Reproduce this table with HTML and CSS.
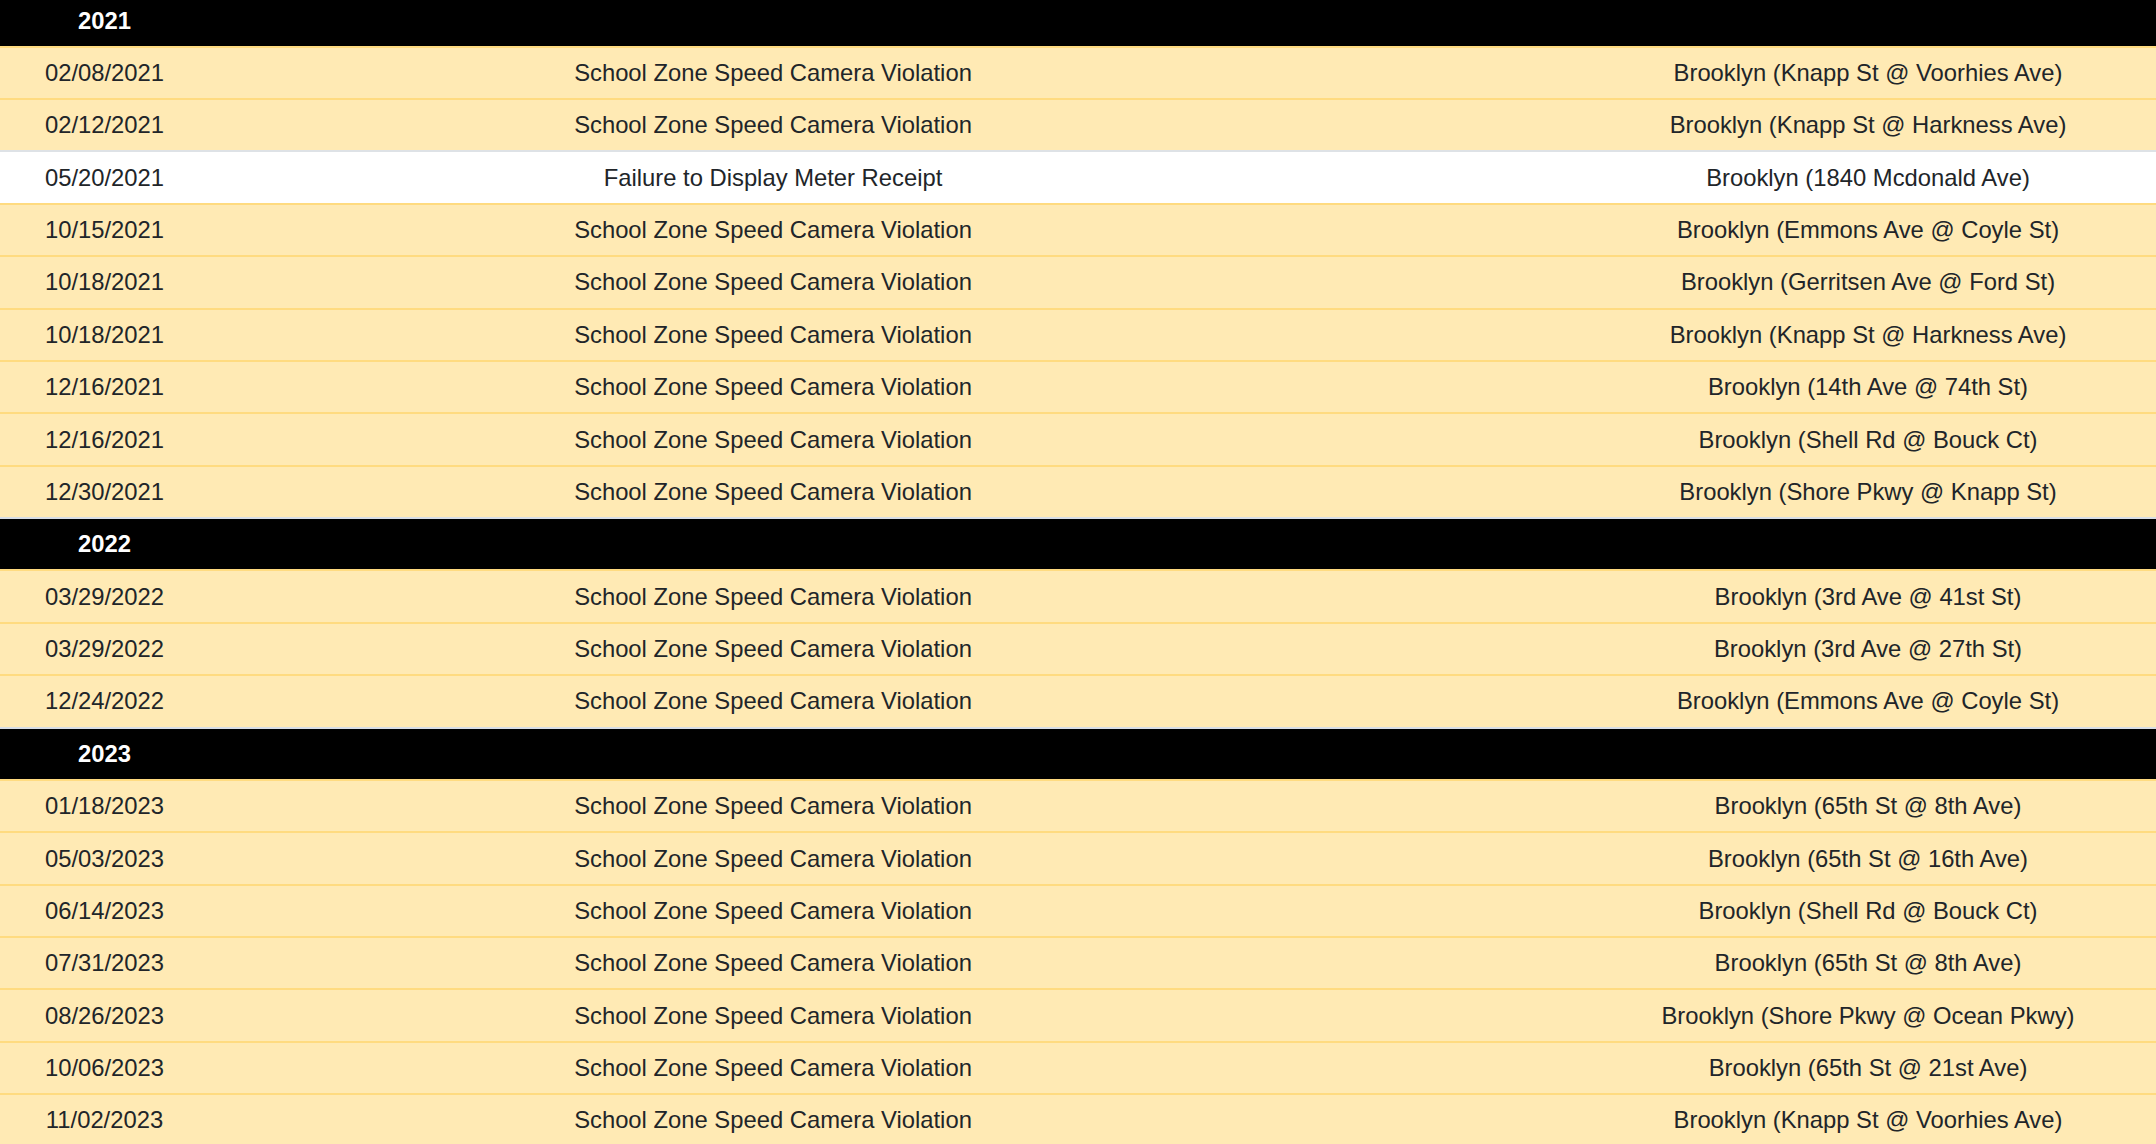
FILE: index.html
```html
<!DOCTYPE html>
<html lang="en">
<head>
<meta charset="utf-8">
<title>Violations</title>
<link rel="stylesheet" href="styles.css">
</head>
<body>
<div class="table">
  <div class="row year"><div class="cell">2021</div><div class="cell"></div><div class="cell"></div><div class="cell"></div></div>
  <div class="row warn"><div class="cell">02/08/2021</div><div class="cell">School Zone Speed Camera Violation</div><div class="cell"></div><div class="cell">Brooklyn (Knapp St @ Voorhies Ave)</div></div>
  <div class="row warn"><div class="cell">02/12/2021</div><div class="cell">School Zone Speed Camera Violation</div><div class="cell"></div><div class="cell">Brooklyn (Knapp St @ Harkness Ave)</div></div>
  <div class="row plain"><div class="cell">05/20/2021</div><div class="cell">Failure to Display Meter Receipt</div><div class="cell"></div><div class="cell">Brooklyn (1840 Mcdonald Ave)</div></div>
  <div class="row warn"><div class="cell">10/15/2021</div><div class="cell">School Zone Speed Camera Violation</div><div class="cell"></div><div class="cell">Brooklyn (Emmons Ave @ Coyle St)</div></div>
  <div class="row warn"><div class="cell">10/18/2021</div><div class="cell">School Zone Speed Camera Violation</div><div class="cell"></div><div class="cell">Brooklyn (Gerritsen Ave @ Ford St)</div></div>
  <div class="row warn"><div class="cell">10/18/2021</div><div class="cell">School Zone Speed Camera Violation</div><div class="cell"></div><div class="cell">Brooklyn (Knapp St @ Harkness Ave)</div></div>
  <div class="row warn"><div class="cell">12/16/2021</div><div class="cell">School Zone Speed Camera Violation</div><div class="cell"></div><div class="cell">Brooklyn (14th Ave @ 74th St)</div></div>
  <div class="row warn"><div class="cell">12/16/2021</div><div class="cell">School Zone Speed Camera Violation</div><div class="cell"></div><div class="cell">Brooklyn (Shell Rd @ Bouck Ct)</div></div>
  <div class="row warn"><div class="cell">12/30/2021</div><div class="cell">School Zone Speed Camera Violation</div><div class="cell"></div><div class="cell">Brooklyn (Shore Pkwy @ Knapp St)</div></div>
  <div class="row year"><div class="cell">2022</div><div class="cell"></div><div class="cell"></div><div class="cell"></div></div>
  <div class="row warn"><div class="cell">03/29/2022</div><div class="cell">School Zone Speed Camera Violation</div><div class="cell"></div><div class="cell">Brooklyn (3rd Ave @ 41st St)</div></div>
  <div class="row warn"><div class="cell">03/29/2022</div><div class="cell">School Zone Speed Camera Violation</div><div class="cell"></div><div class="cell">Brooklyn (3rd Ave @ 27th St)</div></div>
  <div class="row warn"><div class="cell">12/24/2022</div><div class="cell">School Zone Speed Camera Violation</div><div class="cell"></div><div class="cell">Brooklyn (Emmons Ave @ Coyle St)</div></div>
  <div class="row year"><div class="cell">2023</div><div class="cell"></div><div class="cell"></div><div class="cell"></div></div>
  <div class="row warn"><div class="cell">01/18/2023</div><div class="cell">School Zone Speed Camera Violation</div><div class="cell"></div><div class="cell">Brooklyn (65th St @ 8th Ave)</div></div>
  <div class="row warn"><div class="cell">05/03/2023</div><div class="cell">School Zone Speed Camera Violation</div><div class="cell"></div><div class="cell">Brooklyn (65th St @ 16th Ave)</div></div>
  <div class="row warn"><div class="cell">06/14/2023</div><div class="cell">School Zone Speed Camera Violation</div><div class="cell"></div><div class="cell">Brooklyn (Shell Rd @ Bouck Ct)</div></div>
  <div class="row warn"><div class="cell">07/31/2023</div><div class="cell">School Zone Speed Camera Violation</div><div class="cell"></div><div class="cell">Brooklyn (65th St @ 8th Ave)</div></div>
  <div class="row warn"><div class="cell">08/26/2023</div><div class="cell">School Zone Speed Camera Violation</div><div class="cell"></div><div class="cell">Brooklyn (Shore Pkwy @ Ocean Pkwy)</div></div>
  <div class="row warn"><div class="cell">10/06/2023</div><div class="cell">School Zone Speed Camera Violation</div><div class="cell"></div><div class="cell">Brooklyn (65th St @ 21st Ave)</div></div>
  <div class="row warn"><div class="cell">11/02/2023</div><div class="cell">School Zone Speed Camera Violation</div><div class="cell"></div><div class="cell">Brooklyn (Knapp St @ Voorhies Ave)</div></div>
</div>
</body>
</html>
```
FILE: styles.css
```css
html, body {
  margin: 0;
  padding: 0;
  background: #ffffff;
}
body {
  font-family: "Liberation Sans", Arial, Helvetica, sans-serif;
  font-size: 23.8px;
  color: #212529;
}
.table {
  margin-top: -6.7px;
}
.row {
  display: grid;
  grid-template-columns: 209px 1128px 243px 1fr;
  height: 52.375px;
  box-sizing: border-box;
  border-top: 2px solid #dee2e6;
}
.cell {
  display: flex;
  align-items: center;
  justify-content: center;
  white-space: nowrap;
}
.warn {
  background: #ffeab4;
  border-top-color: #ffdb80;
}
.plain {
  background: #ffffff;
}
.year {
  background: #000000;
  color: #ffffff;
  font-weight: bold;
  border-top-color: #d7dde5;
}
```
